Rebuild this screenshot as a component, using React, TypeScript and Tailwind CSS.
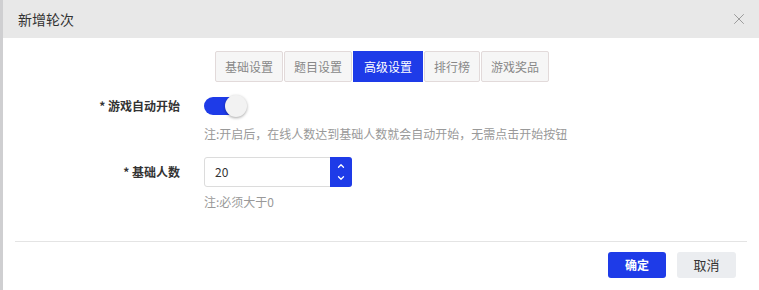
import { X, ChevronUp, ChevronDown } from 'lucide-react';

const tabs = ['基础设置', '题目设置', '高级设置', '排行榜', '游戏奖品'];

export default function App() {
  return (
    <div
      className="w-[759px] h-[290px] bg-[#cfcfd1] pl-[3px] overflow-hidden"
      style={{ fontFamily: '"Noto Sans CJK SC", "Noto Sans", sans-serif' }}
    >
      <div className="h-full bg-white flex flex-col">
        {/* header */}
        <div className="h-[38px] bg-[#e8e8e8] flex items-center justify-between pl-[15px] pr-[11px]">
          <span className="text-[14px] text-[#333]">新增轮次</span>
          <X size={18} strokeWidth={1.3} className="text-[#999]" />
        </div>

        <div className="flex-1 px-[12px]">
          {/* tabs */}
          <div className="flex justify-center gap-px mt-[13px] pl-[2px]">
            {tabs.map((t, i) => (
              <div
                key={t}
                className={
                  i === 2
                    ? 'h-[31px] px-[10px] flex items-center text-[12px] text-white bg-[#1e3be8] border border-[#1e3be8]'
                    : 'h-[31px] px-[9px] flex items-center text-[12px] text-[#888] bg-[#f6f6f6] border border-[#e2dada] rounded-[2px]'
                }
              >
                {t}
              </div>
            ))}
          </div>

          {/* form */}
          <div className="mt-[13px]">
            <div className="flex items-center h-[22px]">
              <div className="w-[189px] text-right pr-[24px] text-[12px] font-bold text-[#333]">* 游戏自动开始</div>
              <div className="relative w-[41px] h-[18px] rounded-full bg-[#1e3be8]">
                <div className="absolute right-[-2px] top-[-2px] w-[22px] h-[22px] rounded-full bg-[#f2f2f2] shadow-[0_1px_3px_rgba(0,0,0,0.35)]" />
              </div>
            </div>
            <div className="pl-[189px] mt-[8px] text-[12px] text-[#999]">
              注:开启后，在线人数达到基础人数就会自动开始，无需点击开始按钮
            </div>

            <div className="flex items-center mt-[14px]">
              <div className="w-[189px] text-right pr-[24px] text-[12px] font-bold text-[#333]">* 基础人数</div>
              <div className="flex h-[30px] w-[148px] border border-[#dcdcdc] rounded-[3px]">
                <div className="flex-1 flex items-center pl-[10px] text-[12px] text-[#333]">20</div>
                <div className="w-[22px] -my-px -mr-px bg-[#1e3be8] rounded-r-[3px] flex flex-col items-center justify-center text-white">
                  <ChevronUp size={10} strokeWidth={3} />
                  <ChevronDown size={10} strokeWidth={3} className="mt-[2px]" />
                </div>
              </div>
            </div>
            <div className="pl-[189px] mt-[6px] text-[12px] text-[#999]">注:必须大于0</div>
          </div>
        </div>

        {/* footer */}
        <div className="mx-[12px] border-t border-[#e4e4e4]" />
        <div className="h-[48px] flex items-start justify-end gap-[11px] pr-[23px] pt-[10px]">
          <button className="w-[58px] h-[26px] rounded-[3px] bg-[#1e3be8] text-white text-[12px] font-bold">确定</button>
          <button className="w-[59px] h-[26px] rounded-[3px] bg-[#ebedf0] text-[#333] text-[13px]">取消</button>
        </div>
      </div>
    </div>
  );
}
